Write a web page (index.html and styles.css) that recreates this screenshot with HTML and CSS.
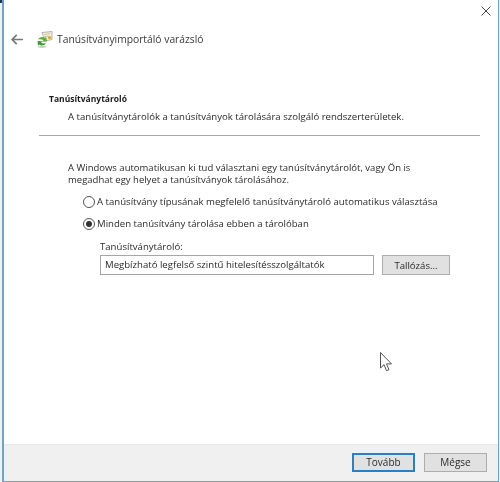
FILE: index.html
```html
<!DOCTYPE html>
<html lang="hu">
<head>
<meta charset="utf-8">
<title>Tanúsítványimportáló varázsló</title>
<link rel="stylesheet" href="styles.css">
</head>
<body>
<span class="desktop-mark"></span>
<div class="window">
  <div class="titlebar">
    <svg class="close" width="10" height="10" viewBox="0 0 10 10"><path d="M.5.5l9 9M9.500.5l-9 9" stroke="#444" stroke-width="1" fill="none"/></svg>
  </div>
  <div class="wizard-head">
    <svg class="back" width="12" height="11" viewBox="0 0 12 11"><path d="M5.700.8L1.200 5.500l4.500 4.700M1.500 5.500H12" stroke="#777" stroke-width="1.700" fill="none"/></svg>
    <svg class="wiz-icon" width="16" height="17" viewBox="0 0 16 17">
      <path d="M5 1.500l10 -1v8l-7 1.500z" fill="#f4efd8" stroke="#9a9a86" stroke-width=".7"/>
      <path d="M7 3.500l6-.8M7.500 5.500l4-.5" stroke="#b9b49a" stroke-width=".7"/>
      <circle cx="12.500" cy="6.500" r="1.600" fill="#d9a632"/>
      <path d="M1 8.500c2-3 5-3 7-1.500l1-1.500 1 5-5 .2 1.500-1.500c-1.500-1-3.500-1-5.500-.7z" fill="#5fae3a"/>
      <path d="M9 12c-2 3-5 3-7 1.500l-1 1.500-.5-5 5 .2L4 11.700c1.500 1 3 1 5 .3z" fill="#3e9a36"/>
      <ellipse cx="5" cy="15.800" rx="4" ry=".9" fill="#b5c7b0"/>
    </svg>
    <span class="wiz-title">Tanúsítványimportáló varázsló</span>
  </div>
  <div class="section-head">
    <div class="section-title">Tanúsítványtároló</div>
    <div class="section-desc">A tanúsítványtárolók a tanúsítványok tárolására szolgáló rendszerterületek.</div>
  </div>
  <hr class="rule">
  <div class="content">
    <p class="intro">A Windows automatikusan ki tud választani egy tanúsítványtárolót, vagy Ön is<br>megadhat egy helyet a tanúsítványok tárolásához.</p>
    <div class="options">
      <div class="option"><span class="radio"></span><span>A tanúsítvány típusának megfelelő tanúsítványtároló automatikus választása</span></div>
      <div class="option"><span class="radio checked"></span><span>Minden tanúsítvány tárolása ebben a tárolóban</span></div>
    </div>
    <div class="store">
      <div class="store-label">Tanúsítványtároló:</div>
      <div class="store-row">
        <div class="store-input">Megbízható legfelső szintű hitelesítésszolgáltatók</div>
        <div class="btn browse">Tallózás...</div>
      </div>
    </div>
  </div>
  <div class="footer">
    <div class="btn action primary">Tovább</div>
    <div class="btn action">Mégse</div>
  </div>
  <svg class="cursor" width="12" height="20" viewBox="0 0 12 20"><path d="M.5.500V16l3.600-3.300 2.400 6 2.500-1-2.500-5.800h5z" fill="#fff" stroke="#555" stroke-width="1"/></svg>
</div>
</body>
</html>
```
FILE: styles.css
```css
* { box-sizing: border-box; }
html, body { margin: 0; padding: 0; }
body { position: relative; width: 500px; height: 482px; overflow: hidden; padding: 0 1px 0 2px; background: #edf2f5; font-family: "Open Sans", "Noto Sans", sans-serif; color: #2a2a2a; font-size: 9.600px; }
.desktop-mark { position: absolute; left: 0; top: 0; width: 3px; height: 3px; background: #23364f; }
.window { position: relative; height: 482px; display: flex; flex-direction: column; background: #fff; border-left: 2px solid #6fa3c7; border-right: 1.500px solid #6fa3c7; border-bottom: 1.500px solid #6fa3c7; filter: blur(.3px); }
.titlebar { height: 26px; display: flex; justify-content: flex-end; align-items: flex-start; padding: 6px 7.500px 0 0; flex: none; }
.wizard-head { height: 26px; display: flex; align-items: center; flex: none; padding-left: 7px; }
.back { flex: none; margin-right: 14px; }
.wiz-icon { flex: none; margin-right: 4px; }
.wiz-title { font-size: 10.300px; color: #3a3a3a; white-space: nowrap; }
.section-head { padding: 40px 0 0 45px; flex: none; }
.section-title { font-weight: 700; font-size: 8.500px; line-height: 13px; color: #1c1c1c; }
.section-desc { margin: 5px 0 0 19px; line-height: 13px; white-space: nowrap; }
.rule { height: 1px; margin: 12px 18.500px 0 35px; border: 0; background: #a8a8a8; flex: none; }
.content { flex: 1; padding: 26px 0 0 64px; }
.intro { margin: 0; font-size: 9.500px; line-height: 12px; white-space: nowrap; }
.options { margin: 9px 0 0 15px; display: flex; flex-direction: column; gap: 9px; }
.option { display: flex; align-items: center; height: 13px; gap: 2px; white-space: nowrap; }
.radio { width: 12px; height: 12px; border-radius: 50%; border: 1px solid #555; background: #fff; flex: none; position: relative; }
.radio.checked::after { content: ""; position: absolute; inset: 2px; border-radius: 50%; background: #333; }
.store { margin: 10px 0 0 32px; }
.store-label { line-height: 13px; }
.store-row { display: flex; align-items: flex-start; gap: 8px; margin-top: 2px; }
.store-input { width: 274px; height: 20px; border: 1px solid #a6a6a6; padding-left: 4px; line-height: 17px; background: #fff; white-space: nowrap; }
.btn { display: flex; align-items: center; justify-content: center; background: #e1e1e1; border: 1px solid #adadad; white-space: nowrap; }
.browse { width: 68px; height: 20px; }
.footer { height: 37.500px; flex: none; background: #f0f0f0; border-top: 1px solid #e9e9e9; display: flex; justify-content: flex-end; gap: 9px; padding: 8px 11px 0 0; }
.action { width: 63px; height: 19.500px; font-size: 10px; }
.primary { border: 2px solid #2f7fbe; }
.cursor { position: absolute; left: 376px; top: 352px; }
```
